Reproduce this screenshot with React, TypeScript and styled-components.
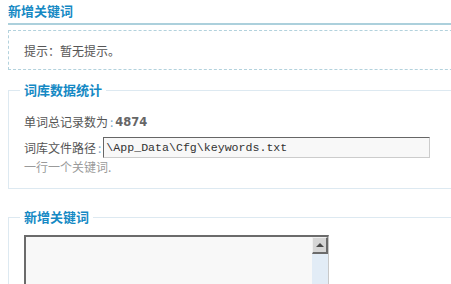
import * as React from "react";
import styled, { createGlobalStyle } from "styled-components";

const GlobalStyle = createGlobalStyle`
  body {
    margin: 0;
    overflow: hidden;
    background: #fff;
    font-family: "Noto Sans CJK SC", "Liberation Sans", sans-serif;
    font-size: 12px;
    color: #555;
  }
`;

const Page = styled.div`
  width: 470px;
  padding: 0 8px;
`;

const PageTitle = styled.div`
  font-size: 13px;
  font-weight: bold;
  line-height: 16px;
  color: #1589c4;
  padding: 3px 0 4px;
  border-bottom: 2px solid #acd0dc;
`;

const TipBox = styled.div`
  margin-top: 5px;
  height: 38px;
  padding: 0 15px;
  display: flex;
  align-items: center;
  border: 1px dashed #b3d2dd;
`;

const Group = styled.fieldset<{ top: number }>`
  margin: ${p => p.top}px 0 0;
  padding: 0 15px;
  border: 1px solid #dde9f1;
  min-width: 0;
`;

const Legend = styled.legend`
  margin-left: -4px;
  padding: 0 4px;
  font-size: 13px;
  font-weight: bold;
  line-height: 16px;
  color: #1589c4;
`;

const Row = styled.div<{ gap?: number }>`
  display: flex;
  align-items: center;
  margin-top: ${p => p.gap || 0}px;
  line-height: 18px;
`;

const Colon = styled.span`
  color: #7aaccc;
  margin: 0 2px 0 2px;
`;

const Count = styled.b`
  font-family: "DejaVu Sans", sans-serif;
  font-size: 11.5px;
  color: #666;
`;

const PathInput = styled.input`
  box-sizing: border-box;
  width: 327px;
  height: 21px;
  margin: 0;
  padding: 0 2px;
  background: #f8f8f8;
  border: 1px solid;
  border-color: #666 #ccc #ccc #666;
  font-family: "Liberation Mono", monospace;
  font-size: 11.6px;
  color: #333;
  outline: none;
`;

const Hint = styled.div`
  color: #9a9a9a;
  line-height: 18px;
  margin: 0 0 12px;
`;

const TextBox = styled.div`
  display: flex;
  width: 302px;
  height: 70px;
  margin-top: 10px;
  border-top: 2px solid #6b6b6b;
  border-left: 2px solid #6b6b6b;
  border-right: 1px solid #c8c8c8;
`;

const KeywordArea = styled.textarea`
  flex: 1;
  margin: 0;
  padding: 2px;
  border: none;
  resize: none;
  outline: none;
  background: #f8f8f8;
  font-family: "Liberation Mono", monospace;
`;

const ScrollTrack = styled.div`
  width: 16px;
  background: #e2ecf6;
`;

const ScrollButton = styled.div`
  box-sizing: border-box;
  height: 17px;
  display: flex;
  align-items: center;
  justify-content: center;
  background: #d6d6d6;
  border-right: 2px solid #6b6b6b;
  border-bottom: 2px solid #6b6b6b;
  border-top: 1px solid #f0f0f0;
  border-left: 1px solid #f0f0f0;
`;

const UpArrow = styled.span`
  width: 0;
  height: 0;
  border-left: 4px solid transparent;
  border-right: 4px solid transparent;
  border-bottom: 4px solid #4a4a4a;
`;

export default function App() {
  return (
    <Page>
      <GlobalStyle />
      <PageTitle>新增关键词</PageTitle>
      <TipBox>提示：暂无提示。</TipBox>
      <Group top={12}>
        <Legend>词库数据统计</Legend>
        <Row gap={15}>
          单词总记录数为<Colon>:</Colon>
          <Count>4874</Count>
        </Row>
        <Row gap={6}>
          词库文件路径<Colon>:</Colon>
          <PathInput defaultValue="\App_Data\Cfg\keywords.txt" />
        </Row>
        <Hint>一行一个关键词.</Hint>
      </Group>
      <Group top={20}>
        <Legend>新增关键词</Legend>
        <TextBox>
          <KeywordArea />
          <ScrollTrack>
            <ScrollButton>
              <UpArrow />
            </ScrollButton>
          </ScrollTrack>
        </TextBox>
      </Group>
    </Page>
  );
}
